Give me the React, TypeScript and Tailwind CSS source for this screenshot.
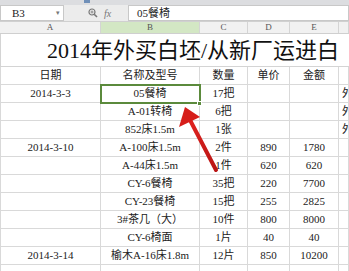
import React from "react";

const font = { fontFamily: '"Liberation Serif", "Noto Sans CJK SC", serif' };

type Row = [string, string, string, string, string, string];
const rows: Row[] = [
  ["日期", "名称及型号", "数量", "单价", "金额", ""],
  ["2014-3-3", "05餐椅", "17把", "", "", "外"],
  ["", "A-01转椅", "6把", "", "", "外"],
  ["", "852床1.5m", "1张", "", "", "外"],
  ["2014-3-10", "A-100床1.5m", "2件", "890", "1780", ""],
  ["", "A-44床1.5m", "1件", "620", "620", ""],
  ["", "CY-6餐椅", "35把", "220", "7700", ""],
  ["", "CY-23餐椅", "15把", "255", "2825", ""],
  ["", "3#茶几（大）", "10件", "800", "8000", ""],
  ["", "CY-6椅面", "1片", "40", "40", ""],
  ["2014-3-14", "榆木A-16床1.8m", "12片", "850", "10200", ""],
  ["", "", "", "", "", ""],
];

const cols = "grid grid-cols-[101px_99px_48px_42px_49px_1fr]";

export default function App() {
  return (
    <div className="relative w-[349px] h-[271px] overflow-hidden bg-white text-[#222]" style={font}>
      {/* top strip */}
      <div className="h-[5px] bg-[#dcdde0] flex">
        <div className="ml-[84px] w-[6px] h-[3px] bg-[#6f8fb8]" />
      </div>
      {/* formula bar */}
      <div className="h-[17px] bg-[#ececec] flex items-stretch border-b border-[#d0d0d0]">
        <div className="w-[64px] bg-white border border-[#c8c8c8] flex items-center justify-between pl-[11px] pr-[3px] text-[11px]">
          <span>B3</span>
          <span className="text-[7px] text-[#777]">▾</span>
        </div>
        <div className="w-[64px] flex items-center pl-[24px] gap-[6px]">
          <svg width="10" height="10" viewBox="0 0 10 10">
            <circle cx="4" cy="4" r="3" fill="none" stroke="#777" strokeWidth="1.2" />
            <line x1="6.2" y1="6.2" x2="9" y2="9" stroke="#777" strokeWidth="1.6" />
            <line x1="2.5" y1="4" x2="5.5" y2="4" stroke="#777" strokeWidth="0.8" />
            <line x1="4" y1="2.5" x2="4" y2="5.5" stroke="#777" strokeWidth="0.8" />
          </svg>
          <span className="italic text-[10px] text-[#777]">fx</span>
        </div>
        <div className="flex-1 bg-white border border-[#c8c8c8] flex items-center pl-[8px] text-[11px]">05餐椅</div>
      </div>
      {/* column headers */}
      <div className={`${cols} h-[12px] bg-[#f1f1f1] border-b border-[#cfcfcf] text-[9px] text-[#555]`}>
        {["A", "B", "C", "D", "E", ""].map((c, i) => (
          <div
            key={i}
            className={`flex items-center justify-center border-r border-[#d4d4d4] leading-none ${i === 1 ? "bg-[#d3e7c4]" : ""}`}
          >
            {c}
          </div>
        ))}
      </div>
      {/* title row */}
      <div className="h-[33px] border-b border-l border-[#d4d4d4] flex items-center pl-[46px] whitespace-nowrap text-[22px] font-normal text-[#111]">
        2014年外买白坯/从新厂运进白
      </div>
      {/* data rows */}
      {rows.map((r, ri) => (
        <div key={ri} className={`${cols} h-[18px] text-[11px]`}>
          {r.map((c, ci) => (
            <div
              key={ci}
              className={`flex items-center border-r border-b border-[#d9d9d9] whitespace-nowrap overflow-hidden ${ci === 0 ? "border-l" : ""} ${ci === 5 ? "justify-start pl-[3px]" : "justify-center"}`}
            >
              {c}
            </div>
          ))}
        </div>
      ))}
      {/* selection */}
      <div className="absolute left-[100px] top-[84px] w-[101px] h-[20px] border-2 border-[#5b8a3c]" />
      <div className="absolute left-[197px] top-[101px] w-[5px] h-[5px] bg-[#5b8a3c] border border-white" />
      {/* red arrow */}
      <svg className="absolute left-0 top-0" width="349" height="271" viewBox="0 0 349 271">
        <defs>
          <linearGradient id="ag" x1="0" y1="0" x2="1" y2="1">
            <stop offset="0" stopColor="#e0231f" />
            <stop offset="1" stopColor="#b81414" />
          </linearGradient>
        </defs>
        <line x1="190" y1="120" x2="216" y2="170" stroke="url(#ag)" strokeWidth="4" strokeLinecap="round" />
        <polygon points="185,107 179,127 200,117" fill="#d61e1a" />
      </svg>
    </div>
  );
}
